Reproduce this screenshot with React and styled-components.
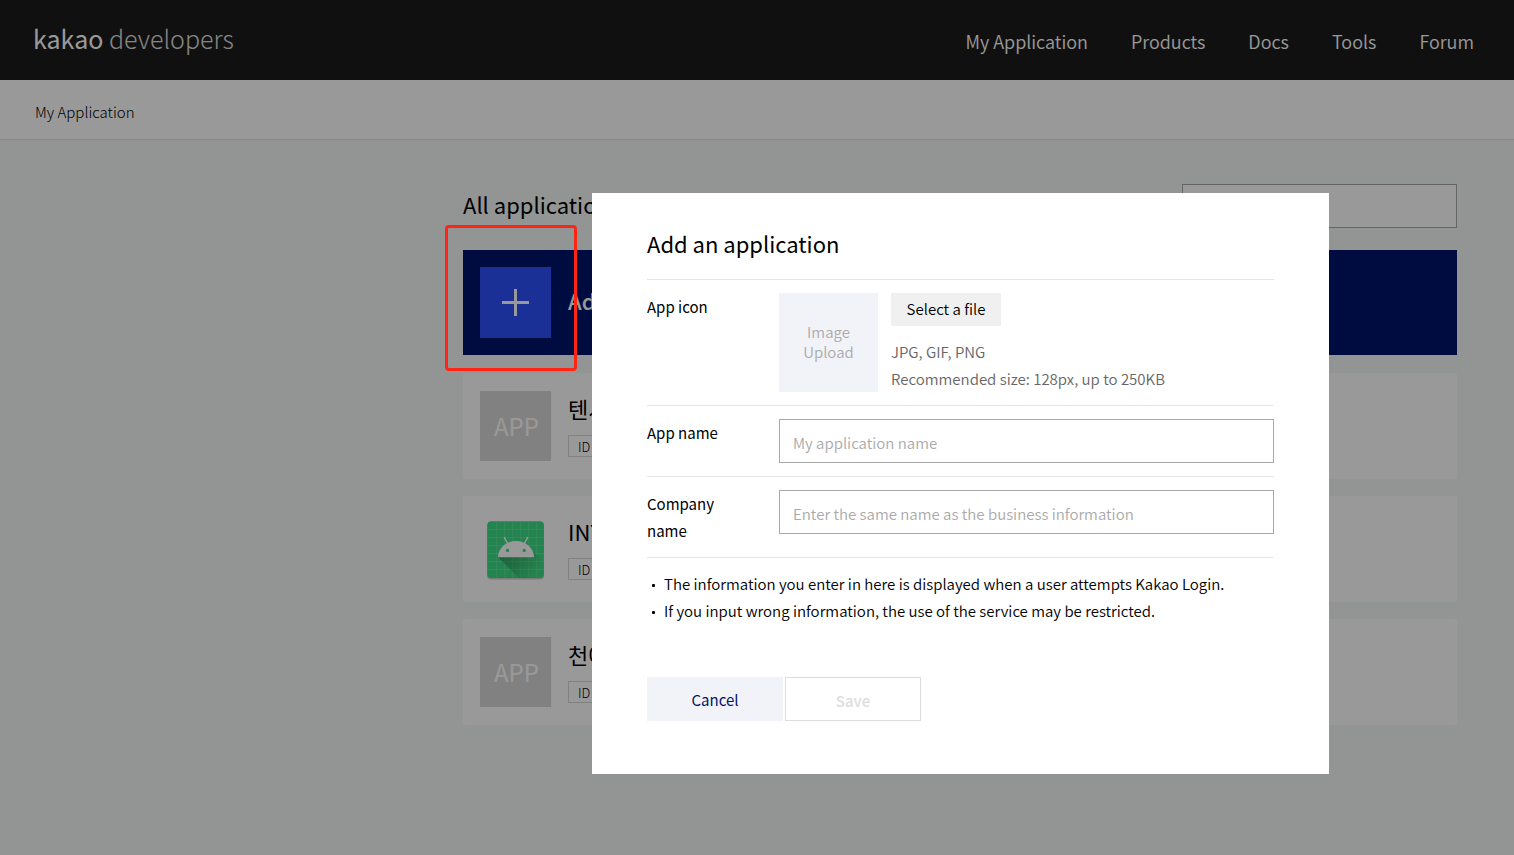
import React from 'react';
import styled, { createGlobalStyle } from 'styled-components';

const apps = [
    { name: '텐서', icon: 'app' },
    { name: 'INT', icon: 'android' },
    { name: '천애', icon: 'app' },
];

const menu = ['My Application', 'Products', 'Docs', 'Tools', 'Forum'];

const gridLines = [16, 24, 32, 40, 48, 56];

function AndroidIcon() {
    return (
        <svg width="71" height="70" viewBox="0 0 71 70" aria-hidden="true">
            <defs>
                <linearGradient id="headShade" x1="26" y1="40" x2="54" y2="62" gradientUnits="userSpaceOnUse">
                    <stop offset="0" stopColor="#1f5a3a" stopOpacity="0.45" />
                    <stop offset="1" stopColor="#1f5a3a" stopOpacity="0" />
                </linearGradient>
            </defs>
            <rect x="7" y="8.5" width="57" height="57" rx="4" fill="#000" opacity="0.2" />
            <rect x="7.3" y="7.2" width="56.6" height="56.8" rx="4" fill="#3ddc84" />
            {gridLines.map((n) => (
                <path key={n} d={`M${n + 0.7} 7.5V64M7.5 ${n - 0.5}H64`} stroke="#fff" strokeWidth="0.7" opacity="0.22" />
            ))}
            <path d="M18 43L38.8 64H60a4 4 0 0 0 4-4V48L52 36z" fill="url(#headShade)" />
            <path d="M24.4 23.6l3 5.4M47.6 23.6l-3 5.4" stroke="#fff" strokeWidth="1.4" strokeLinecap="round" />
            <path d="M18 43.2A18 16.200 0 0 1 54 43.2z" fill="#fff" />
            <circle cx="27.500" cy="36.400" r="1.700" fill="#3ddc84" />
            <circle cx="44.200" cy="36.400" r="1.700" fill="#3ddc84" />
        </svg>
    );
}

function App() {
    return (
        <Page>
            <GlobalStyle />
            <Header>
                <Logo href="#"><b>kakao</b> developers</Logo>
                <Nav>
                    {menu.map((item) => <NavLink href="#" key={item}>{item}</NavLink>)}
                </Nav>
            </Header>
            <SubHeader><a href="#">My Application</a></SubHeader>

            <Main>
                <ListHead>
                    <ListTitle>All applications</ListTitle>
                    <SearchInput type="search" aria-label="Search applications" />
                </ListHead>
                <AddCard>
                    <AddButton type="button">
                        <PlusBox>
                            <svg width="27" height="27" viewBox="0 0 27 27" aria-hidden="true">
                                <path d="M13.500 0v27M0 13.500h27" stroke="#fff" strokeWidth="3" />
                            </svg>
                        </PlusBox>
                        <AddText>Add an application</AddText>
                    </AddButton>
                    <Highlight />
                </AddCard>
                <AppList>
                    {apps.map((app) => (
                        <AppCard key={app.name}>
                            {app.icon === 'android' ? <AndroidIcon /> : <Thumb>APP</Thumb>}
                            <div>
                                <AppName>{app.name}</AppName>
                                <IdBadge>ID</IdBadge>
                            </div>
                        </AppCard>
                    ))}
                </AppList>
            </Main>

            <Overlay>
                <Modal role="dialog" aria-labelledby="modal-title">
                    <ModalTitle id="modal-title">Add an application</ModalTitle>
                    <Row>
                        <Label as="span">App icon</Label>
                        <Preview>Image Upload</Preview>
                        <FileInfo>
                            <FileButton type="button">Select a file</FileButton>
                            <Hint>JPG, GIF, PNG<br />Recommended size: 128px, up to 250KB</Hint>
                        </FileInfo>
                    </Row>
                    <Row>
                        <Label htmlFor="app-name">App name</Label>
                        <TextInput id="app-name" type="text" placeholder="My application name" />
                    </Row>
                    <Row>
                        <Label htmlFor="company-name">Company name</Label>
                        <TextInput id="company-name" type="text" placeholder="Enter the same name as the business information" />
                    </Row>
                    <Notes>
                        <Note>The information you enter in here is displayed when a user attempts Kakao Login.</Note>
                        <Note>If you input wrong information, the use of the service may be restricted.</Note>
                    </Notes>
                    <Actions>
                        <CancelButton type="button">Cancel</CancelButton>
                        <SaveButton type="button" disabled>Save</SaveButton>
                    </Actions>
                </Modal>
            </Overlay>
        </Page>
    );
}

const GlobalStyle = createGlobalStyle`
    * {
        box-sizing: border-box;
    }
    body {
        margin: 0;
        color: #000;
        font-family: "Noto Sans CJK KR", "Noto Sans", sans-serif;
        font-size: 15px;
        font-weight: 350;
        line-height: 27px;
    }
    a {
        color: inherit;
        text-decoration: none;
    }
    button, input {
        font: inherit;
        border-radius: 0;
    }
    h1, h2, h3, ul {
        margin: 0;
        padding: 0;
    }
`
const Page = styled.div`
    min-height: 100vh;
    background-color: #f4f8f5;
`
const Header = styled.header`
    display: flex;
    justify-content: space-between;
    align-items: center;
    height: 80px;
    padding: 0 40px 0 33px;
    background-color: #1b1b1b;
    color: #fff;
`
const Logo = styled.a`
    padding-bottom: 3px;
    font-size: 25px;
    font-weight: 300;
    color: #e0e0e0;

    b {
        font-weight: 400;
        color: #fff;
    }
`
const Nav = styled.nav`
    display: flex;
    gap: 43px;
    padding-top: 2px;
`
const NavLink = styled.a`
    font-size: 18px;
`
const SubHeader = styled.div`
    height: 60px;
    padding: 18px 35px;
    background-color: #fff;
    border-bottom: 1px solid #e6eae8;
    font-weight: 300;
`
const Main = styled.main`
    padding: 44px 57px 0 463px;
`
const ListHead = styled.div`
    display: flex;
    justify-content: space-between;
    align-items: center;
    margin-bottom: 22px;
`
const ListTitle = styled.h1`
    padding-bottom: 4px;
    font-size: 22px;
    font-weight: 400;
`
const SearchInput = styled.input`
    width: 275px;
    height: 44px;
    border: 1px solid #a9a9a9;
    background-color: #fff;
`
const AddCard = styled.div`
    position: relative;
    margin-bottom: 18px;
`
const AddButton = styled.button`
    display: flex;
    align-items: center;
    gap: 17px;
    width: 100%;
    height: 105px;
    padding: 0 17px;
    border: 0;
    background-color: #00146b;
    color: #fff;
`
const PlusBox = styled.span`
    display: flex;
    justify-content: center;
    align-items: center;
    width: 71px;
    height: 71px;
    background-color: #2d50fb;
`
const AddText = styled.span`
    padding-bottom: 4px;
    font-size: 22px;
    font-weight: 500;
`
/* guide frame, stays above the dimmed layer */
const Highlight = styled.div`
    position: absolute;
    top: -25px;
    left: -18px;
    z-index: 20;
    width: 132px;
    height: 146px;
    border: 3px solid #ff2414;
    border-radius: 4px;
    pointer-events: none;
`
const AppList = styled.div`
    display: flex;
    flex-direction: column;
    gap: 17px;
`
const AppCard = styled.article`
    display: flex;
    align-items: center;
    gap: 17px;
    height: 106px;
    padding: 0 17px;
    border-radius: 2px;
    background-color: #fff;
`
const Thumb = styled.div`
    display: flex;
    justify-content: center;
    align-items: center;
    width: 71px;
    height: 70px;
    padding: 0 0 2px 2px;
    background-color: #d8d8d8;
    color: #fff;
    font-size: 24px;
    font-weight: 400;
`
const AppName = styled.h3`
    font-size: 22px;
    font-weight: 400;
    line-height: 25px;
`
const IdBadge = styled.span`
    display: block;
    width: 90px;
    height: 22px;
    margin-top: 14px;
    padding-left: 9px;
    border: 1px solid #d8d8d8;
    font-size: 13px;
    font-weight: 300;
    line-height: 22px;
`
const Overlay = styled.div`
    position: fixed;
    inset: 0;
    z-index: 10;
    display: flex;
    justify-content: center;
    align-items: flex-start;
    padding: 193px 0 0 407px;
    background-color: rgba(0, 0, 0, 0.4);
`
const Modal = styled.section`
    width: 737px;
    padding: 32px 55px 53px;
    background-color: #fff;
`
const ModalTitle = styled.h2`
    margin-bottom: 18px;
    font-size: 22px;
    font-weight: 400;
    line-height: 36px;
`
const Row = styled.div`
    display: flex;
    align-items: flex-start;
    padding: 13px 0;
    border-top: 1px solid #e5e5e5;
`
const Label = styled.label`
    flex: none;
    width: 132px;
    padding-right: 44px;
    font-weight: 400;
`
const Preview = styled.div`
    display: flex;
    align-items: center;
    width: 99px;
    height: 99px;
    padding: 0 16px 1px;
    background-color: #f2f3f9;
    color: #aaa;
    line-height: 20px;
    text-align: center;
`
const FileInfo = styled.div`
    padding-left: 13px;
`
const FileButton = styled.button`
    width: 110px;
    height: 33px;
    padding: 0 0 2px;
    border: 0;
    background-color: #f0f0f0;
    color: #000;
`
const Hint = styled.div`
    margin-top: 12px;
    color: #666;
`
const TextInput = styled.input`
    flex: 1;
    height: 44px;
    padding: 2px 13px 0;
    border: 1px solid #a9a9a9;

    &::placeholder {
        color: #aaa;
    }
`
const Notes = styled.ul`
    padding-top: 12px;
    border-top: 1px solid #e5e5e5;
    list-style: none;
`
const Note = styled.li`
    display: flex;
    align-items: center;
    gap: 9px;
    padding-left: 5px;

    &::before {
        content: '';
        width: 3px;
        height: 3px;
        margin-top: 3px;
        border-radius: 1px;
        background-color: #000;
    }
`
const Actions = styled.div`
    display: flex;
    gap: 2px;
    margin-top: 53px;
`
const ActionButton = styled.button`
    width: 136px;
    height: 44px;
`
const CancelButton = styled(ActionButton)`
    padding: 0;
    border: 0;
    background-color: #f2f3f9;
    color: #00146b;
    font-weight: 400;
`
const SaveButton = styled(ActionButton)`
    padding: 2px 0 0;
    border: 1px solid #ddd;
    background-color: #fff;
    color: #ddd;
    font-weight: 500;
`

export default App;
